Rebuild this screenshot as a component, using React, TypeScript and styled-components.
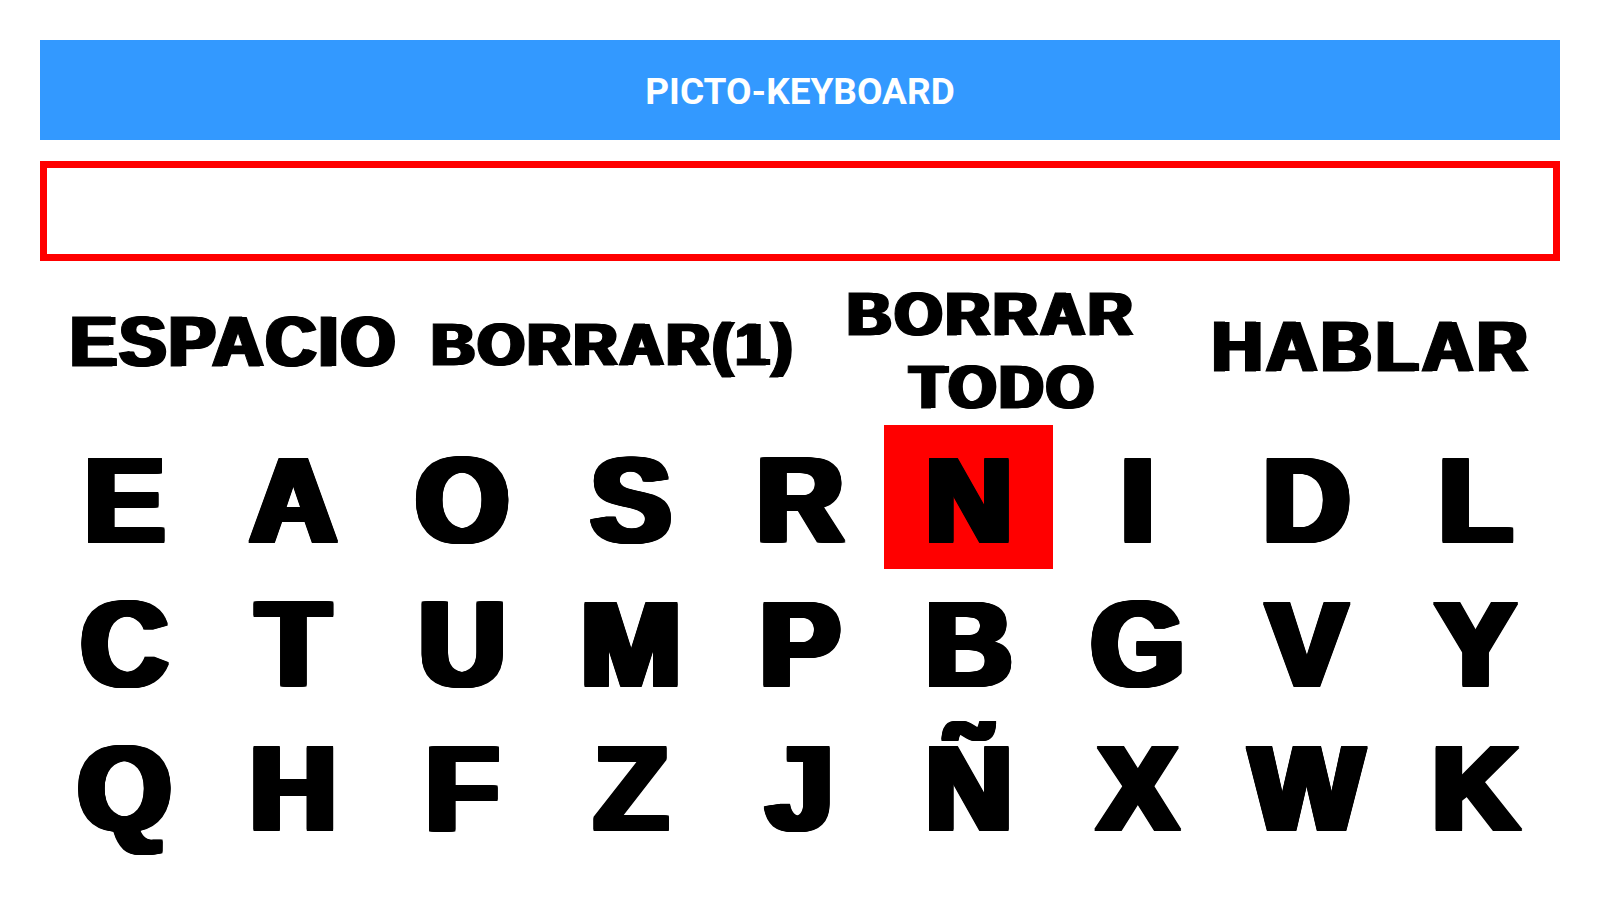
import React from "react";
import styled, { createGlobalStyle } from "styled-components";

const GlobalStyle = createGlobalStyle`
  html, body { margin: 0; padding: 0; background: #ffffff; }
  body { font-family: "Liberation Sans", Arial, sans-serif; }
`;

/* heavy "Arial Black" look: thicken a bold face with layered shadows,
   mostly to the right so vertical stems get heavier than horizontal bars */
const heavy = (left: number, right: number, v: number) => {
  const out: string[] = [];
  for (let x = -left; x <= right; x++) {
    for (let y = -v; y <= v; y++) {
      if (x === 0 && y === 0) continue;
      out.push(`${x}px ${y}px 0 #000`);
    }
  }
  return out.join(", ");
};

const Page = styled.div`
  padding: 40px 40px 0 40px;
  display: flex;
  flex-direction: column;
`;

const Header = styled.header`
  height: 100px;
  box-sizing: border-box;
  padding-top: 2px;
  background: #3399ff;
  display: flex;
  align-items: center;
  justify-content: center;
  font-family: Roboto, "Liberation Sans", sans-serif;
  font-weight: 700;
  font-size: 37px;
  color: #ffffff;
`;

const TextBox = styled.div`
  margin-top: 21px;
  height: 100px;
  box-sizing: border-box;
  border: 7px solid #ff0000;
  background: #ffffff;
`;

const Actions = styled.div`
  display: grid;
  grid-template-columns: repeat(4, 1fr);
  height: 164px;
`;

const ActionButton = styled.div<{ $shift: number }>`
  display: flex;
  flex-direction: column;
  align-items: center;
  justify-content: center;
  box-sizing: border-box;
  padding-top: ${(p) => Math.max(0, p.$shift)}px;
  padding-bottom: ${(p) => Math.max(0, -p.$shift)}px;
  cursor: pointer;
`;

const ActionLabel = styled.span<{ $size: number; $spacing: number; $lh?: number; $indent?: number }>`
  display: block;
  text-align: center;
  font-family: "Liberation Sans", Arial, sans-serif;
  font-weight: 700;
  font-size: ${(p) => p.$size}px;
  line-height: ${(p) => (p.$lh ? `${p.$lh}px` : 1)};
  letter-spacing: ${(p) => p.$spacing}px;
  margin-left: ${(p) => p.$indent ?? 0}px;
  margin-right: ${(p) => 5 - p.$spacing}px;
  -webkit-text-stroke: 1px #000;
  text-shadow: ${heavy(0, 5, 0)};
  color: #000;
  white-space: nowrap;
`;

const Grid = styled.div`
  display: grid;
  grid-template-columns: repeat(9, 1fr);
  grid-auto-rows: 144px;
`;

const Key = styled.div<{ $active?: boolean }>`
  display: flex;
  align-items: center;
  justify-content: center;
  padding-top: 5px;
  box-sizing: border-box;
  background: ${(p) => (p.$active ? "#ff0000" : "transparent")};
  cursor: pointer;
`;

const Glyph = styled.span`
  display: inline-block;
  font-family: "Liberation Sans", Arial, sans-serif;
  font-weight: 700;
  font-size: 120px;
  line-height: 1;
  margin-right: 7px;
  text-shadow: ${heavy(1, 8, 1)};
  color: #000;
`;

const rows = [
  ["E", "A", "O", "S", "R", "N", "I", "D", "L"],
  ["C", "T", "U", "M", "P", "B", "G", "V", "Y"],
  ["Q", "H", "F", "Z", "J", "Ñ", "X", "W", "K"],
];

export default function App() {
  return (
    <>
      <GlobalStyle />
      <Page>
        <Header>PICTO-KEYBOARD</Header>
        <TextBox />
        <Actions>
          <ActionButton $shift={-3}>
            <ActionLabel $size={70} $spacing={2.5} $indent={6}>ESPACIO</ActionLabel>
          </ActionButton>
          <ActionButton $shift={4}>
            <ActionLabel $size={60} $spacing={3} $indent={4}>BORRAR(1)</ActionLabel>
          </ActionButton>
          <ActionButton $shift={16}>
            <ActionLabel $size={61} $spacing={3.5} $lh={73}>BORRAR</ActionLabel>
            <ActionLabel $size={61} $spacing={3} $lh={73} $indent={24}>TODO</ActionLabel>
          </ActionButton>
          <ActionButton $shift={7}>
            <ActionLabel $size={70} $spacing={4}>HABLAR</ActionLabel>
          </ActionButton>
        </Actions>
        <Grid>
          {rows.flat().map((l) => (
            <Key key={l} $active={l === "N"}>
              <Glyph>{l}</Glyph>
            </Key>
          ))}
        </Grid>
      </Page>
    </>
  );
}
